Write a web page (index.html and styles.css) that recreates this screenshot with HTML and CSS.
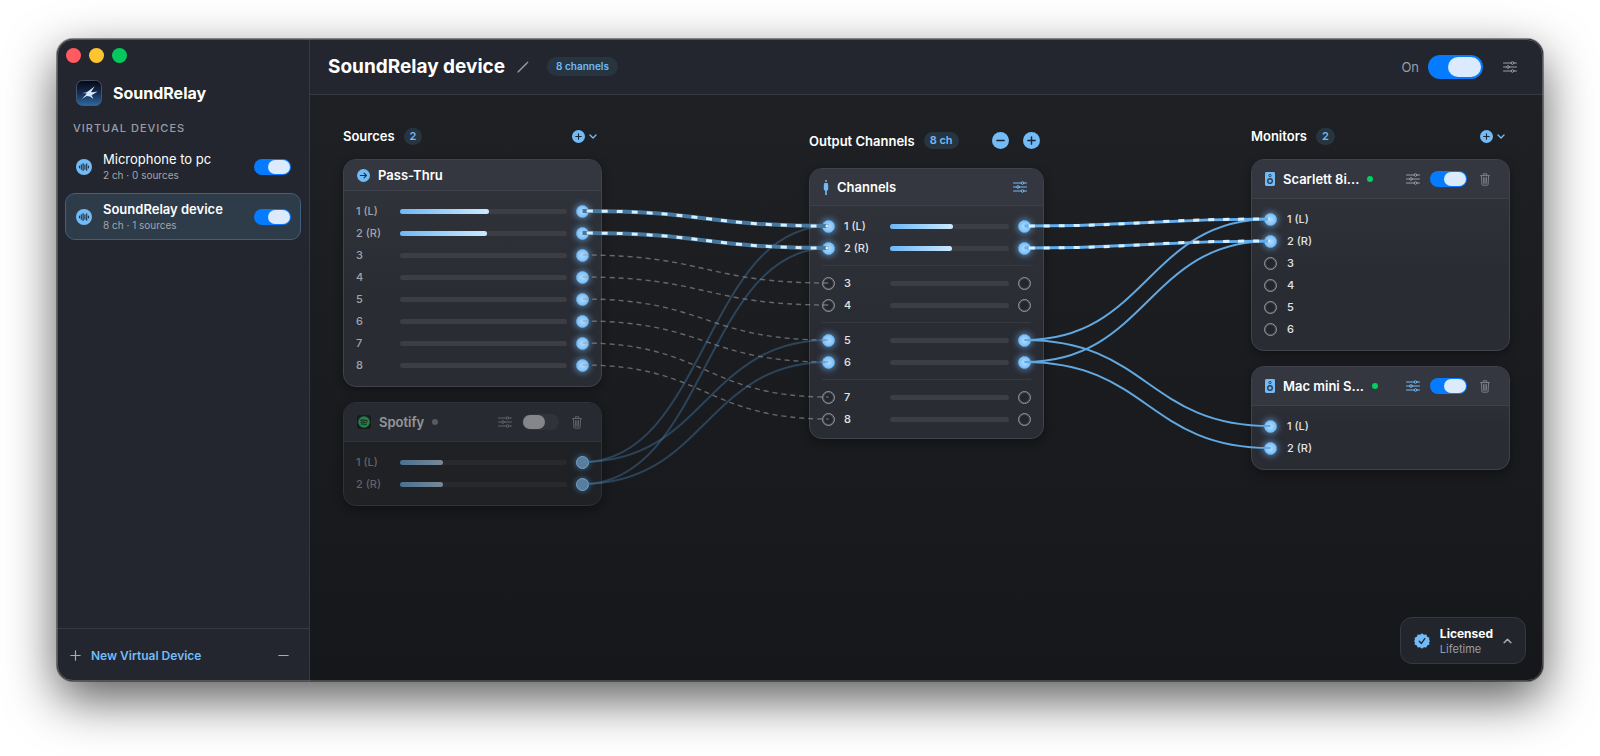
FILE: index.html
```html
<!DOCTYPE html>
<html lang="en">
<head>
  <meta charset="UTF-8">
  <meta name="viewport" content="width=device-width, initial-scale=1.0">
  <title>SoundRelay</title>
  <link rel="stylesheet" href="styles.css">
</head>
<body>

  <!-- Shared icons -->
  <svg class="sprite" aria-hidden="true">
    <symbol id="i-sliders" viewBox="0 0 14 12" fill="none" stroke="currentColor" stroke-linecap="round">
      <path d="M.5 2H8M11 2h2.500M.5 6h3M6.500 6h7M.5 10H8M11 10h2.500"/>
      <circle cx="9.500" cy="2" r="1.300"/><circle cx="5" cy="6" r="1.300"/><circle cx="9.500" cy="10" r="1.300"/>
    </symbol>
    <symbol id="i-trash" viewBox="0 0 10 13" fill="none" stroke="currentColor" stroke-linecap="round" stroke-linejoin="round">
      <path d="M.6 2.600h8.800M3.300 2.500V.8h3.400v1.700M1.400 2.800l.5 8.500c0 .6.400.9.900.9h4.400c.5 0 .9-.3.900-.9l.5-8.500M3.500 4.600l.2 5.800M5 4.600v5.800M6.500 4.600l-.2 5.800"/>
    </symbol>
    <symbol id="i-plus" viewBox="0 0 14 14">
      <circle cx="7" cy="7" r="7" fill="currentColor"/>
      <path d="M7 4v6M4 7h6" stroke="#1c2733" stroke-width="1.200" stroke-linecap="round"/>
    </symbol>
    <symbol id="i-minus" viewBox="0 0 14 14">
      <circle cx="7" cy="7" r="7" fill="currentColor"/>
      <path d="M4 7h6" stroke="#1c2733" stroke-width="1.200" stroke-linecap="round"/>
    </symbol>
    <symbol id="i-chevron" viewBox="0 0 8 5" fill="none" stroke="currentColor" stroke-width="1.400" stroke-linecap="round" stroke-linejoin="round">
      <path d="M1 1l3 3 3-3"/>
    </symbol>
    <symbol id="i-wave" viewBox="0 0 16 16">
      <circle cx="8" cy="8" r="8" fill="currentColor"/>
      <path d="M3.500 7.200v1.600M5.300 5.800v4.400M7.100 4.500v7M8.900 5.800v4.400M10.700 4.800v6.400M12.500 7.200v1.600" stroke="#25384a" stroke-width="1.200" stroke-linecap="round"/>
    </symbol>
    <symbol id="i-speaker" viewBox="0 0 10 14">
      <rect width="10" height="14" rx="1.400" fill="currentColor"/>
      <g fill="none" stroke="#2b3f52"><circle cx="5" cy="3.600" r="1.200" stroke-width=".9"/><circle cx="5" cy="9" r="2.300" stroke-width="1.400"/></g>
    </symbol>
  </svg>

  <div class="window">

    <!-- Sidebar -->
    <aside class="sidebar">
      <div class="lights">
        <button class="light light-red" aria-label="Close"></button>
        <button class="light light-yellow" aria-label="Minimize"></button>
        <button class="light light-green" aria-label="Zoom"></button>
      </div>
      <div class="brand">
        <svg class="logo" viewBox="0 0 26 26" aria-hidden="true">
          <defs><linearGradient id="logoBg" x1="0" y1="0" x2="0" y2="1"><stop offset="0" stop-color="#05070f"/><stop offset=".5" stop-color="#152c50"/><stop offset="1" stop-color="#2d699f"/></linearGradient></defs>
          <rect x=".5" y=".5" width="25" height="25" rx="6" fill="url(#logoBg)" stroke="#4f6075" stroke-width=".8"/>
          <path d="M18.800 6.200l-6.600 5-2.200 1.200-3.800.6 4.600.6-1.600 1.800-3.400 3.600 5-3 3.200.6 3.400 2.400-1.800-3.800 2.800-1.600 3.200-2.200-5 .8-1.600-.2z" fill="#d5e6fb"/>
        </svg>
        <span class="brand-name">SoundRelay</span>
      </div>
      <h2 class="side-title">VIRTUAL DEVICES</h2>
      <ul class="devices">
        <li class="device">
          <svg class="device-icon"><use href="#i-wave"/></svg>
          <label class="device-text" for="dev1"><span class="device-name">Microphone to pc</span><span class="device-sub">2 ch · 0 sources</span></label>
          <input class="toggle" type="checkbox" id="dev1" checked>
        </li>
        <li class="device active">
          <svg class="device-icon"><use href="#i-wave"/></svg>
          <label class="device-text" for="dev2"><span class="device-name">SoundRelay device</span><span class="device-sub">8 ch · 1 sources</span></label>
          <input class="toggle" type="checkbox" id="dev2" checked>
        </li>
      </ul>
      <div class="side-footer">
        <button class="new-device">
          <svg width="11" height="11" viewBox="0 0 11 11" aria-hidden="true"><path d="M5.500.8v9.400M.8 5.500h9.400" stroke="currentColor" stroke-width="1.200" stroke-linecap="round"/></svg>
          New Virtual Device
        </button>
        <button class="icon-btn accent" aria-label="Remove device">
          <svg width="11" height="11" viewBox="0 0 11 11"><path d="M.8 5.500h9.400" stroke="currentColor" stroke-width="1.200" stroke-linecap="round"/></svg>
        </button>
      </div>
    </aside>

    <!-- Main -->
    <main class="main">
      <header class="topbar">
        <h1>SoundRelay device</h1>
        <button class="icon-btn" aria-label="Rename">
          <svg width="12" height="12" viewBox="0 0 12 12"><path d="M2 10L10 2" stroke="currentColor" stroke-width="1.500"/><path d="M1 11l1-1M10.300 1.700l.5-.5" stroke="currentColor" stroke-width="1.200" stroke-linecap="round"/></svg>
        </button>
        <span class="badge badge-lg">8 channels</span>
        <label class="power" for="power">On</label>
        <input class="toggle toggle-lg" type="checkbox" id="power" checked>
        <button class="icon-btn" aria-label="Settings"><svg width="14" height="12"><use href="#i-sliders"/></svg></button>
      </header>

      <div class="board" id="board">

        <!-- Sources -->
        <section class="column">
          <div class="column-head">
            <h2>Sources</h2><span class="badge">2</span>
            <button class="add-btn" aria-label="Add source"><svg width="13" height="13"><use href="#i-plus"/></svg><svg width="8" height="5"><use href="#i-chevron"/></svg></button>
          </div>
          <article class="card">
            <div class="card-head card-head-sm">
              <svg class="accent" width="13" height="13" viewBox="0 0 14 14"><circle cx="7" cy="7" r="7" fill="currentColor"/><path d="M3.600 7h6.600M7.600 4.400L10.200 7l-2.600 2.600" fill="none" stroke="#1c2f40" stroke-width="1.200" stroke-linecap="round" stroke-linejoin="round"/></svg>
              <h3>Pass-Thru</h3>
            </div>
            <div class="rows rows-source">
              <div class="row"><span>1 (L)</span><div class="meter"><i style="width:53%"></i></div><b class="port on" id="p1"></b></div>
              <div class="row"><span>2 (R)</span><div class="meter"><i style="width:52%"></i></div><b class="port on" id="p2"></b></div>
              <div class="row"><span>3</span><div class="meter"></div><b class="port on" id="p3"></b></div>
              <div class="row"><span>4</span><div class="meter"></div><b class="port on" id="p4"></b></div>
              <div class="row"><span>5</span><div class="meter"></div><b class="port on" id="p5"></b></div>
              <div class="row"><span>6</span><div class="meter"></div><b class="port on" id="p6"></b></div>
              <div class="row"><span>7</span><div class="meter"></div><b class="port on" id="p7"></b></div>
              <div class="row"><span>8</span><div class="meter"></div><b class="port on" id="p8"></b></div>
            </div>
          </article>
          <article class="card muted">
            <div class="card-head">
              <svg width="14" height="14" viewBox="0 0 14 14"><rect width="14" height="14" rx="3" fill="#0b0c0d"/><circle cx="7" cy="7" r="5.800" fill="#1ed760"/><path d="M3.700 5.300c2.200-.6 4.700-.4 6.700.7M4 7.300c1.900-.5 3.900-.3 5.600.6M4.300 9.100c1.500-.3 3-.2 4.500.6" fill="none" stroke="#0b0c0d" stroke-linecap="round"/></svg>
              <h3>Spotify</h3><span class="dot"></span>
              <div class="tools">
                <button class="icon-btn" aria-label="Spotify settings"><svg width="14" height="12"><use href="#i-sliders"/></svg></button>
                <input class="toggle" type="checkbox" aria-label="Spotify enabled">
                <button class="icon-btn" aria-label="Remove Spotify"><svg width="10" height="13"><use href="#i-trash"/></svg></button>
              </div>
            </div>
            <div class="rows rows-source">
              <div class="row"><span>1 (L)</span><div class="meter"><i style="width:26%"></i></div><b class="port on" id="s1"></b></div>
              <div class="row"><span>2 (R)</span><div class="meter"><i style="width:26%"></i></div><b class="port on" id="s2"></b></div>
            </div>
          </article>
        </section>

        <!-- Output channels -->
        <section class="column column-mid">
          <div class="column-head column-head-lg">
            <h2>Output Channels</h2><span class="badge">8 ch</span>
            <div class="stepper">
              <button class="icon-btn accent" aria-label="Fewer channels"><svg width="17" height="17"><use href="#i-minus"/></svg></button>
              <button class="icon-btn accent" aria-label="More channels"><svg width="17" height="17"><use href="#i-plus"/></svg></button>
            </div>
          </div>
          <article class="card">
            <div class="card-head card-head-md">
              <svg class="accent" width="6" height="15" viewBox="0 0 6 15" fill="currentColor"><rect x="2" y="0" width="2" height="2" opacity=".7"/><path d="M1.200 3h3.600v1.200l.4.500v4.800L3.800 11v4H2.200v-4L.8 9.500V4.700l.4-.5z"/></svg>
              <h3>Channels</h3>
              <div class="tools">
                <button class="icon-btn accent" aria-label="Channel settings"><svg width="14" height="12"><use href="#i-sliders"/></svg></button>
              </div>
            </div>
            <div class="rows rows-channel">
              <div class="row"><b class="port on" id="i1"></b><span>1 (L)</span><div class="meter"><i style="width:53%"></i></div><b class="port on" id="o1"></b></div>
              <div class="row"><b class="port on" id="i2"></b><span>2 (R)</span><div class="meter"><i style="width:52%"></i></div><b class="port on" id="o2"></b></div>
              <hr>
              <div class="row"><b class="port" id="i3"></b><span>3</span><div class="meter"></div><b class="port"></b></div>
              <div class="row"><b class="port" id="i4"></b><span>4</span><div class="meter"></div><b class="port"></b></div>
              <hr>
              <div class="row"><b class="port on" id="i5"></b><span>5</span><div class="meter"></div><b class="port on" id="o5"></b></div>
              <div class="row"><b class="port on" id="i6"></b><span>6</span><div class="meter"></div><b class="port on" id="o6"></b></div>
              <hr>
              <div class="row"><b class="port" id="i7"></b><span>7</span><div class="meter"></div><b class="port"></b></div>
              <div class="row"><b class="port" id="i8"></b><span>8</span><div class="meter"></div><b class="port"></b></div>
            </div>
          </article>
        </section>

        <!-- Monitors -->
        <section class="column">
          <div class="column-head">
            <h2>Monitors</h2><span class="badge">2</span>
            <button class="add-btn" aria-label="Add monitor"><svg width="13" height="13"><use href="#i-plus"/></svg><svg width="8" height="5"><use href="#i-chevron"/></svg></button>
          </div>
          <article class="card">
            <div class="card-head">
              <svg class="accent" width="10" height="14"><use href="#i-speaker"/></svg>
              <h3>Scarlett 8i...</h3><span class="dot dot-on"></span>
              <div class="tools">
                <button class="icon-btn" aria-label="Scarlett settings"><svg width="14" height="12"><use href="#i-sliders"/></svg></button>
                <input class="toggle" type="checkbox" aria-label="Scarlett enabled" checked>
                <button class="icon-btn dim" aria-label="Remove Scarlett"><svg width="10" height="13"><use href="#i-trash"/></svg></button>
              </div>
            </div>
            <div class="rows rows-monitor">
              <div class="row"><b class="port on" id="a1"></b><span>1 (L)</span></div>
              <div class="row"><b class="port on" id="a2"></b><span>2 (R)</span></div>
              <div class="row"><b class="port"></b><span>3</span></div>
              <div class="row"><b class="port"></b><span>4</span></div>
              <div class="row"><b class="port"></b><span>5</span></div>
              <div class="row"><b class="port"></b><span>6</span></div>
            </div>
          </article>
          <article class="card">
            <div class="card-head">
              <svg class="accent" width="10" height="14"><use href="#i-speaker"/></svg>
              <h3>Mac mini S...</h3><span class="dot dot-on"></span>
              <div class="tools">
                <button class="icon-btn accent" aria-label="Mac mini settings"><svg width="14" height="12"><use href="#i-sliders"/></svg></button>
                <input class="toggle" type="checkbox" aria-label="Mac mini enabled" checked>
                <button class="icon-btn dim" aria-label="Remove Mac mini"><svg width="10" height="13"><use href="#i-trash"/></svg></button>
              </div>
            </div>
            <div class="rows rows-monitor">
              <div class="row"><b class="port on" id="m1"></b><span>1 (L)</span></div>
              <div class="row"><b class="port on" id="m2"></b><span>2 (R)</span></div>
            </div>
          </article>
        </section>

        <svg class="wires" id="wires" aria-hidden="true"></svg>
      </div>

      <button class="license">
        <svg class="accent" width="16" height="16" viewBox="0 0 16 16"><path d="M8 .3l1.900 1.500 2.400-.3.900 2.300 2.200.9-.3 2.400L16 8l-.9 1.200.3 2.300-2.200.9-.9 2.200-2.400-.3L8 15.700l-1.900-1.400-2.400.3-.9-2.200-2.200-.9.300-2.300L0 8l.9-.9-.3-2.400 2.200-.9.900-2.300 2.400.3z" fill="currentColor"/><path d="M5.300 8.300l2 2.200 3.500-4.900" fill="none" stroke="#1f3345" stroke-width="1.400" stroke-linecap="round" stroke-linejoin="round"/></svg>
        <span class="license-text"><strong>Licensed</strong><span>Lifetime</span></span>
        <svg class="up" width="9" height="6" viewBox="0 0 8 5"><use href="#i-chevron"/></svg>
      </button>
    </main>
  </div>

  <script src="script.js"></script>
</body>
</html>
```

FILE: styles.css
```css
* { margin: 0; padding: 0; box-sizing: border-box; }
:root {
  --accent: #72bbf7;
  --text: #fff;
  --grey: #9b9da6;
  --line: #363941;
}
body {
  min-height: 100vh;
  display: flex;
  padding: 39px 57px 75px;
  background: #fff;
  color: var(--text);
  font-family: Inter, "Liberation Sans", sans-serif;
  font-size: 11px;
}
button {
  font: inherit;
  color: inherit;
  background: none;
  border: none;
  cursor: pointer;
}
svg { display: block; flex: none; }
.sprite { position: absolute; width: 0; height: 0; }
.accent { color: var(--accent); }

.window {
  flex: 1;
  display: flex;
  position: relative;
  border-radius: 16px;
  overflow: hidden;
  background: #23262e;
  box-shadow: 0 0 0 1px rgba(0, 0, 0, 0.4), 0 18px 50px rgba(0, 0, 0, 0.65);
}
/* light rim on the window edge */
.window::after {
  content: "";
  position: absolute;
  inset: 0;
  border: 1px solid rgba(255, 255, 255, 0.22);
  border-radius: 16px;
  pointer-events: none;
}

/* Sidebar */
.sidebar {
  flex: none;
  width: 253px;
  display: flex;
  flex-direction: column;
  border-right: 1px solid var(--line);
}
.lights { display: flex; gap: 8px; padding: 9px 9px 0; }
.light { width: 15px; height: 15px; border-radius: 50%; }
.light-red { background: #ff5b60; }
.light-yellow { background: #ffc531; }
.light-green { background: #05c95c; }
.brand {
  display: flex;
  align-items: center;
  gap: 11px;
  padding: 17px 19px 0;
}
.logo { width: 26px; height: 26px; }
.brand-name { font-size: 16px; font-weight: 700; }
.side-title {
  padding: 14px 16px 0;
  font-size: 11px;
  line-height: 16px;
  font-weight: 500;
  letter-spacing: 1px;
  color: var(--grey);
}
.devices {
  list-style: none;
  display: grid;
  gap: 3px;
  padding: 7px 8px 0;
}
.device {
  display: flex;
  align-items: center;
  gap: 11px;
  height: 47px;
  padding: 0 9px 0 10px;
  border: 1px solid transparent;
  border-radius: 10px;
}
.device.active { background: #2e3b48; border-color: #3f6080; }
.device-icon { width: 16px; height: 16px; color: var(--accent); }
.device-text { flex: 1; display: grid; }
.device-name { font-size: 13px; line-height: 17px; }
.active .device-name { font-weight: 600; }
.device-sub { font-size: 10px; line-height: 14px; color: #a1a5ae; }
.side-footer {
  margin-top: auto;
  height: 53px;
  display: flex;
  align-items: center;
  justify-content: space-between;
  padding: 0 20px 0 13px;
  border-top: 1px solid var(--line);
}
.new-device {
  display: flex;
  align-items: center;
  gap: 10px;
  font-size: 12px;
  font-weight: 600;
  color: var(--accent);
}

/* Toggles */
.toggle {
  appearance: none;
  flex: none;
  display: flex;
  justify-content: flex-start;
  width: 37px;
  height: 16px;
  padding: 1px;
  border-radius: 12px;
  background: #3a3d44;
  cursor: pointer;
}
.toggle::before {
  content: "";
  width: 22px;
  border-radius: 12px;
  background: #e0e1e3;
}
.toggle:checked { justify-content: flex-end; background: #057bff; }
.toggle:checked::before { background: #dbeafd; }
.toggle-lg { width: 55px; height: 24px; padding: 2px; }
.toggle-lg::before { width: 33px; }

/* Top bar */
.main {
  flex: 1;
  position: relative;
  display: flex;
  flex-direction: column;
  background: linear-gradient(#1f2125, #16171b);
}
.topbar {
  display: flex;
  align-items: center;
  height: 56px;
  padding: 0 26px 0 18px;
  background: #23262e;
  border-bottom: 1px solid var(--line);
}
h1 { margin-right: 12px; font-size: 19px; font-weight: 700; }
.icon-btn { display: flex; color: var(--grey); }
.icon-btn.accent { color: var(--accent); }
.icon-btn.dim { color: #7c7f87; }
.badge {
  padding: 0 6px;
  border-radius: 10px;
  background: #273541;
  color: var(--accent);
  font-size: 11px;
  line-height: 17px;
  font-weight: 600;
}
.badge-lg { margin-left: 18px; padding: 0 9px; font-size: 10px; line-height: 19px; }
.power { margin: 0 9px 0 auto; font-size: 13px; color: var(--grey); }
.topbar .toggle { margin-right: 17px; }

/* Board */
.board {
  flex: 1;
  position: relative;
  display: flex;
  justify-content: space-between;
  align-items: flex-start;
  padding: 30px 33px;
}
.column { width: 259px; display: grid; gap: 15px; }
.column-mid { width: 235px; }
.column-head {
  display: flex;
  align-items: center;
  gap: 9px;
  height: 22px;
  margin-bottom: -3px;
}
.column-head-lg { height: 31px; }
h2, h3 { font-size: 13px; font-weight: 600; white-space: nowrap; }
.add-btn {
  display: flex;
  align-items: center;
  gap: 4px;
  margin-left: auto;
  padding-right: 5px;
  color: var(--accent);
}
.stepper { display: flex; gap: 14px; margin-left: auto; padding-right: 4px; }

.card {
  border: 1px solid #40434b;
  border-radius: 13px;
  background: linear-gradient(#31343b, #2a2c34 60%);
  box-shadow: 0 3px 10px rgba(0, 0, 0, 0.35);
}
.card-head {
  display: flex;
  align-items: center;
  gap: 8px;
  height: 39px;
  padding: 0 19px 0 13px;
  border-bottom: 1px solid #3e4149;
  border-radius: 12px 12px 0 0;
  background: #343740;
}
.card-head-sm { height: 31px; }
.card-head-md { height: 37px; padding-right: 16px; }
.tools { display: flex; align-items: center; gap: 10px; margin-left: auto; }
.toggle + .icon-btn { margin-left: 3px; }
.dot { width: 6px; height: 6px; border-radius: 50%; background: #8a8c92; }
.dot-on { background: #05cf5f; }

.rows { padding: 9px 12px 10px; }
.row {
  display: grid;
  align-items: center;
  gap: 9px;
  height: 22px;
  color: #e2e3e6;
  font-weight: 500;
  font-size: 11px;
}
.rows-source .row { grid-template-columns: 35px 1fr 13px; color: #a3a5ab; }
.rows-channel { padding-bottom: 8px; }
.rows-channel .row { grid-template-columns: 13px 37px 1fr 13px; }
.rows-monitor .row { grid-template-columns: 13px 1fr; gap: 10px; }
.rows hr { border: none; height: 1px; margin: 6px 0; background: #363940; }
.meter { height: 5px; border-radius: 3px; background: #3c3e44; }
.meter i {
  display: block;
  height: 100%;
  border-radius: 3px;
  background: linear-gradient(to right, #6db8f7, #cbe9fd);
}
.port {
  width: 13px;
  height: 13px;
  border: 1px solid #9698a0;
  border-radius: 50%;
  background: #23262d;
  box-shadow: inset 0 0 0 1px rgba(150, 152, 160, 0.35);
}
.port.on {
  border-color: #6db8f7;
  background: radial-gradient(#b4dcfc, #75bcf8 80%);
  box-shadow: 0 0 6px 1px rgba(114, 187, 247, 0.6);
}

/* Source that is switched off */
.muted { border-color: #2f3238; background: #1f2125; }
.muted .card-head { border-color: #2f3238; background: #272a31; }
.muted .card-head > *, .muted .row span { opacity: 0.5; }
.muted .meter { background: #27292d; }
.muted .meter i { opacity: 0.5; }
.muted .port { border-color: #6ba5d6; background: #5c7d9a; box-shadow: 0 0 6px rgba(114, 187, 247, 0.5); }

/* Wires */
.wires {
  position: absolute;
  inset: 0;
  width: 100%;
  height: 100%;
  fill: none;
  pointer-events: none;
}
.wire { stroke: #61a8e1; stroke-width: 2; }
.wire-faint { stroke: #4a86b8; stroke-width: 2; opacity: 0.38; }
.wire-idle { stroke: #98999c; stroke-width: 1.4; stroke-dasharray: 5 4; stroke-linecap: butt; opacity: 0.6; }
.wire-glow { stroke: #46779f; stroke-width: 4; }
.wire-live { stroke: #62aeee; stroke-width: 3; }
.wire-flow { stroke: #d8effe; stroke-width: 3; stroke-dasharray: 6 9; stroke-dashoffset: -4; stroke-linecap: butt; }

/* License */
.license {
  position: absolute;
  right: 17px;
  bottom: 17px;
  display: flex;
  align-items: center;
  gap: 10px;
  height: 47px;
  padding: 0 13px;
  border: 1px solid #363941;
  border-radius: 12px;
  background: #22252c;
  text-align: left;
}
.license-text { display: grid; font-size: 11px; line-height: 14px; color: var(--grey); }
.license-text strong { font-size: 12px; line-height: 16px; font-weight: 700; color: var(--text); }
.up { transform: rotate(180deg); color: #a6a9b0; }
```

FILE: script.js
```js
// [from port, to port, kind]
const links = [
  ["p3", "i3", "idle"], ["p4", "i4", "idle"], ["p5", "i5", "idle"],
  ["p6", "i6", "idle"], ["p7", "i7", "idle"], ["p8", "i8", "idle"],
  ["s1", "i1", "faint"], ["s2", "i2", "faint"], ["s1", "i5", "faint"], ["s2", "i6", "faint"],
  ["o5", "a1", "on"], ["o6", "a2", "on"], ["o5", "m1", "on"], ["o6", "m2", "on"],
  ["p1", "i1", "dim"], ["p2", "i2", "dim"], ["o1", "a1", "live"], ["o2", "a2", "live"]
];

const classes = {
  idle: ["wire-idle"],
  faint: ["wire-faint"],
  on: ["wire"],
  dim: ["wire-glow", "wire-flow"],
  live: ["wire-live", "wire-flow"]
};

function center(id, box) {
  const r = document.getElementById(id).getBoundingClientRect();
  return { x: r.left + r.width / 2 - box.left, y: r.top + r.height / 2 - box.top };
}

function drawWires() {
  const svg = document.getElementById("wires");
  const box = document.getElementById("board").getBoundingClientRect();
  svg.innerHTML = "";
  links.forEach(([from, to, kind]) => {
    const a = center(from, box);
    const b = center(to, box);
    const mid = (a.x + b.x) / 2;
    classes[kind].forEach(name => {
      const path = document.createElementNS("http://www.w3.org/2000/svg", "path");
      path.setAttribute("class", name);
      path.setAttribute("d", `M${a.x} ${a.y}C${mid} ${a.y} ${mid} ${b.y} ${b.x} ${b.y}`);
      svg.appendChild(path);
    });
  });
}

drawWires();
window.addEventListener("resize", drawWires);
```
